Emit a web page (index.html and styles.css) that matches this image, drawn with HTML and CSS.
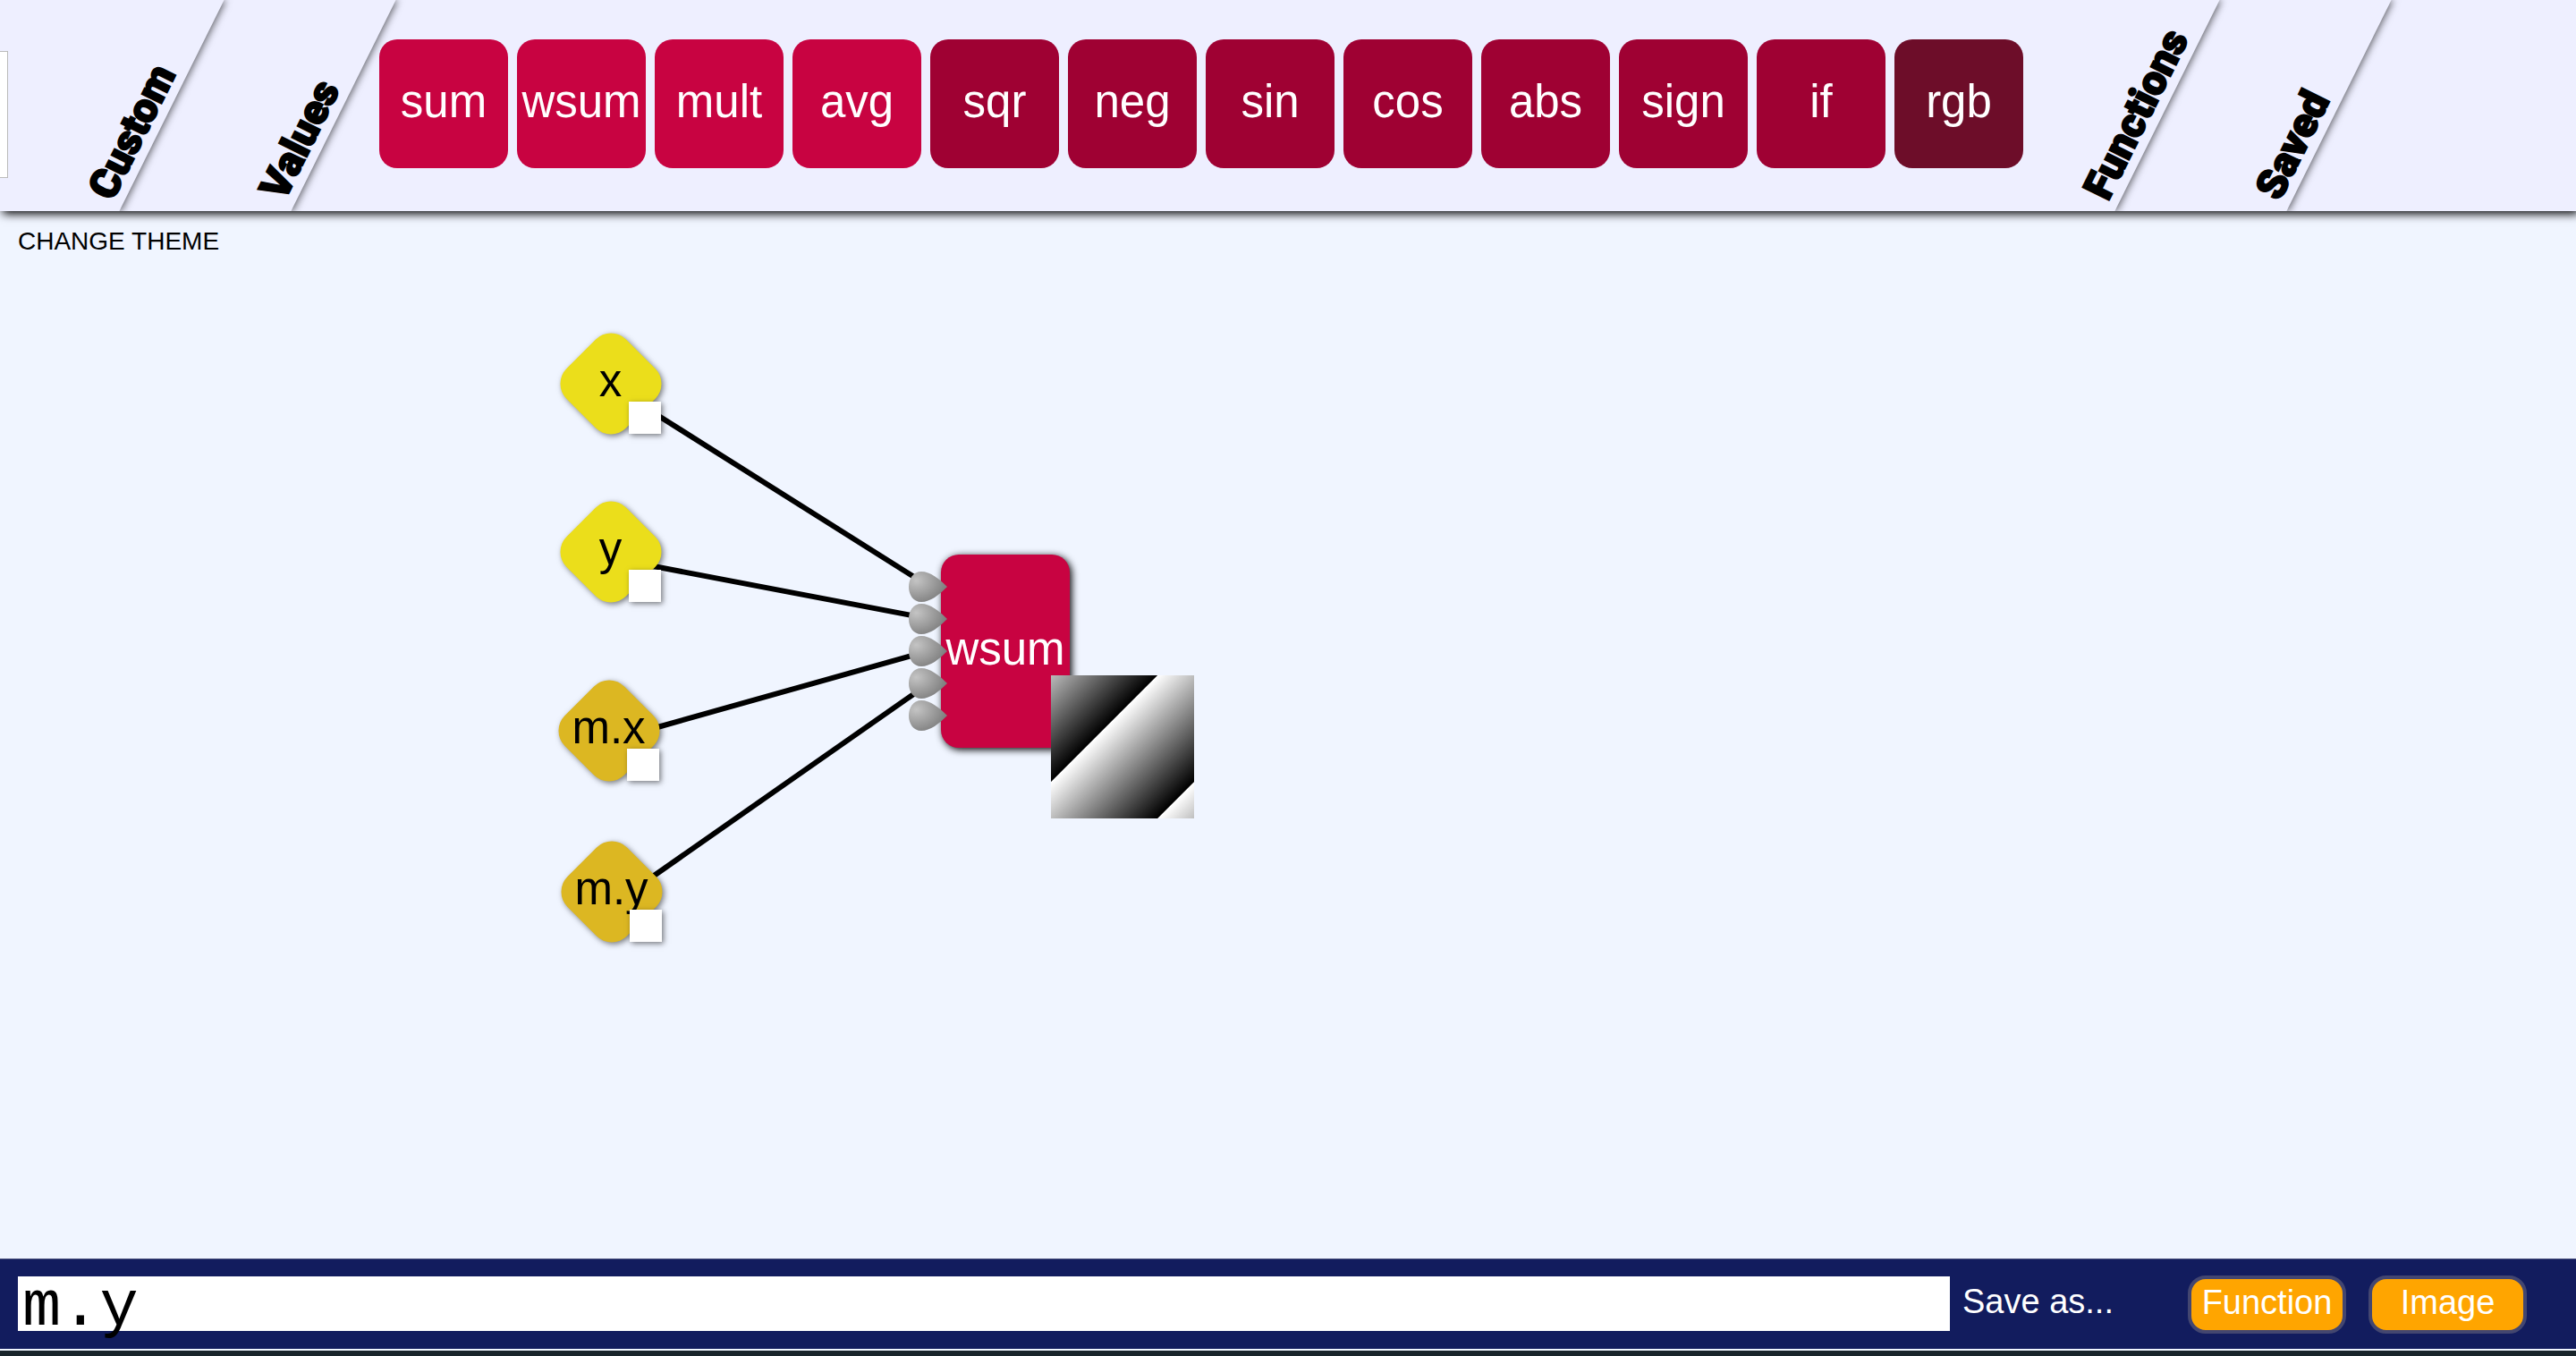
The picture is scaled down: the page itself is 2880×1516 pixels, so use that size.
FILE: index.html
```html
<!DOCTYPE html>
<html lang="en">
<head>
<meta charset="utf-8">
<title>Function graph</title>
<link rel="stylesheet" href="styles.css">
</head>
<body>
<header class="menu">
  <section class="drawer drawer-custom">
    <button class="slot" type="button" aria-label="Custom value"></button>
    <button class="tab" type="button">Custom</button>
  </section>
  <section class="drawer drawer-values">
    <button class="tab" type="button">Values</button>
  </section>
  <section class="drawer drawer-functions">
    <div class="tiles">
      <button class="tile many" type="button">sum</button>
      <button class="tile many" type="button">wsum</button>
      <button class="tile many" type="button">mult</button>
      <button class="tile many" type="button">avg</button>
      <button class="tile single" type="button">sqr</button>
      <button class="tile single" type="button">neg</button>
      <button class="tile single" type="button">sin</button>
      <button class="tile single" type="button">cos</button>
      <button class="tile single" type="button">abs</button>
      <button class="tile single" type="button">sign</button>
      <button class="tile single" type="button">if</button>
      <button class="tile color" type="button">rgb</button>
    </div>
    <button class="tab" type="button">Functions</button>
  </section>
  <section class="drawer drawer-saved">
    <button class="tab" type="button">Saved</button>
  </section>
</header>

<main class="canvas">
  <button class="theme" type="button">CHANGE THEME</button>
  <svg class="links" aria-hidden="true">
    <g stroke="#000" stroke-width="6">
      <line x1="730" y1="225" x2="1030" y2="414"/>
      <line x1="720" y1="395" x2="1030" y2="454"/>
      <line x1="728" y1="579" x2="1030" y2="494"/>
      <line x1="724" y1="748" x2="1030" y2="534"/>
    </g>
  </svg>
  <div class="node value node-x"><span class="name">x</span><span class="preview"></span></div>
  <div class="node value node-y"><span class="name">y</span><span class="preview"></span></div>
  <div class="node mouse node-mx"><span class="name">m.x</span><span class="preview"></span></div>
  <div class="node mouse node-my"><span class="name">m.y</span><span class="preview"></span></div>
  <div class="func">
    <span class="func-name">wsum</span>
    <svg class="ports" viewBox="0 0 44 180" aria-hidden="true">
      <defs>
        <radialGradient id="metal" cx="0.2" cy="0.3" r="0.9">
          <stop offset="0" stop-color="#c4c4c4"/>
          <stop offset="1" stop-color="#757575"/>
        </radialGradient>
        <path id="port" d="M43 17C34 8 24 0 14 0C5 0 0 8 0 17S5 34 14 34C24 34 34 26 43 17Z" fill="url(#metal)"/>
      </defs>
      <use href="#port" y="1"/>
      <use href="#port" y="37"/>
      <use href="#port" y="73"/>
      <use href="#port" y="109"/>
      <use href="#port" y="145"/>
    </svg>
    <div class="render"></div>
  </div>
</main>

<footer class="bar">
  <input class="formula" type="text" value="m.y" aria-label="Formula" spellcheck="false">
  <span class="save-label">Save as...</span>
  <div class="actions">
    <button class="save" type="button">Function</button>
    <button class="save" type="button">Image</button>
  </div>
</footer>
</body>
</html>
```
FILE: styles.css
```css
* { box-sizing: border-box; }

body {
  margin: 0;
  min-height: 100vh;
  display: flex;
  flex-direction: column;
  background: #f0f5ff;
  border-bottom: 6px solid #19252b;
  font-family: "Liberation Sans", Arial, sans-serif;
  color: #000;
}

button {
  margin: 0;
  padding: 0;
  border: 0;
  background: none;
  color: inherit;
  font: inherit;
  cursor: pointer;
}

/* top menu: slanted drawers, each lying over the one to its right */
.menu {
  position: relative;
  z-index: 2;
  display: flex;
  height: 236px;
  background: #eeefff;
  box-shadow: 3px 3px 10px #000;
  clip-path: inset(0 0 -20px 0);
}

.drawer {
  position: relative;
  display: flex;
  align-items: center;
  min-width: 192px;
}

.drawer::before {
  content: "";
  position: absolute;
  inset: 0 0 0 -120px;
  background: #eeefff;
  box-shadow: 2px 0 8px rgba(0, 0, 0, 0.6);
  transform: skewX(-26.4deg);
  clip-path: inset(0 -20px 0 0);
}

.drawer-custom { z-index: 4; }
.drawer-values { z-index: 3; }
.drawer-functions { z-index: 2; padding: 0 161px 4px 40px; }
.drawer-saved { z-index: 1; }

.tab {
  position: absolute;
  left: calc(100% - 60px);
  bottom: 7px;
  font: 900 46px/46px Impact, Roboto, "Liberation Sans", sans-serif;
  -webkit-text-stroke: 2px #000;
  transform: rotate(-63.6deg);
  transform-origin: left bottom;
}

.slot {
  position: relative;
  width: 9px;
  height: 142px;
  margin-top: 20px;
  background: #fff;
  border: 1px solid #bbb;
  border-left: 0;
}

.tiles {
  position: relative;
  display: flex;
  gap: 10px;
}

.tile {
  width: 144px;
  height: 144px;
  padding-bottom: 6px;
  border-radius: 20px;
  color: #fff;
  font-size: 51px;
}

.many { background: #c80341; }
.single { background: #9f0133; }
.color { background: #6d0d29; }

/* graph canvas */
.canvas {
  position: relative;
  flex: 1;
  padding: 17px 20px;
}

.theme {
  font-size: 28px;
  line-height: 34px;
}

.links {
  position: absolute;
  inset: 0;
  width: 100%;
  height: 100%;
}

.node {
  position: absolute;
  width: 113px;
  height: 113px;
  display: flex;
  align-items: center;
  justify-content: center;
  font-size: 51px;
}

.node::before {
  content: "";
  position: absolute;
  width: 94px;
  height: 94px;
  border-radius: 24px;
  background: #ebde1b;
  box-shadow: 3px 0 6px rgba(0, 0, 0, 0.5);
  transform: rotate(45deg);
}

.mouse::before { background: #dcb722; }

.name {
  position: relative;
  padding-bottom: 6px;
}

.preview {
  position: absolute;
  right: 0;
  bottom: 0;
  width: 36px;
  height: 36px;
  background: #fff;
  box-shadow: 2px 2px 6px rgba(0, 0, 0, 0.5);
}

.node-x { left: 626px; top: 136px; }
.node-y { left: 626px; top: 324px; }
.node-mx { left: 624px; top: 524px; }
.node-my { left: 627px; top: 704px; }

.func {
  position: absolute;
  left: 1052px;
  top: 384px;
  width: 144px;
  height: 216px;
  padding-bottom: 6px;
  display: flex;
  align-items: center;
  justify-content: center;
  border-radius: 20px;
  background: #c80341;
  box-shadow: 2px 2px 8px #000;
  color: #fff;
  font-size: 51px;
}

.ports {
  position: absolute;
  left: -36px;
  top: 18px;
  width: 44px;
  height: 180px;
}

.render {
  position: absolute;
  left: 123px;
  top: 135px;
  width: 160px;
  height: 160px;
  background: linear-gradient(135deg, #bbb 0%, #000 37%, #fff 37.5%, #000 87%, #fff 87.5%, #bfbfbf 100%);
}

/* formula bar */
.bar {
  display: flex;
  align-items: center;
  height: 101px;
  padding: 0 55px 0 20px;
  margin-bottom: 2px;
  background: #121c5e;
  border-top: 1px solid #4a4f7c;
}

.formula {
  flex: 1;
  align-self: flex-end;
  min-width: 0;
  height: 81px;
  padding: 0 5px 12px;
  border: 0;
  outline: 0;
  background: linear-gradient(#fff, #fff) 0 0 / 100% 61px no-repeat;
  color: #000;
  font: 72px/68px "Courier New", "Liberation Mono", monospace;
}

.save-label {
  width: 266px;
  padding: 0 0 6px 14px;
  color: #fff;
  font-size: 38px;
}

.actions {
  display: flex;
  gap: 25px;
}

.save {
  width: 177px;
  height: 65px;
  padding-bottom: 4px;
  border: 4px solid #434670;
  border-radius: 20px;
  background: #ffa500;
  color: #fff;
  font-size: 38px;
}
```
